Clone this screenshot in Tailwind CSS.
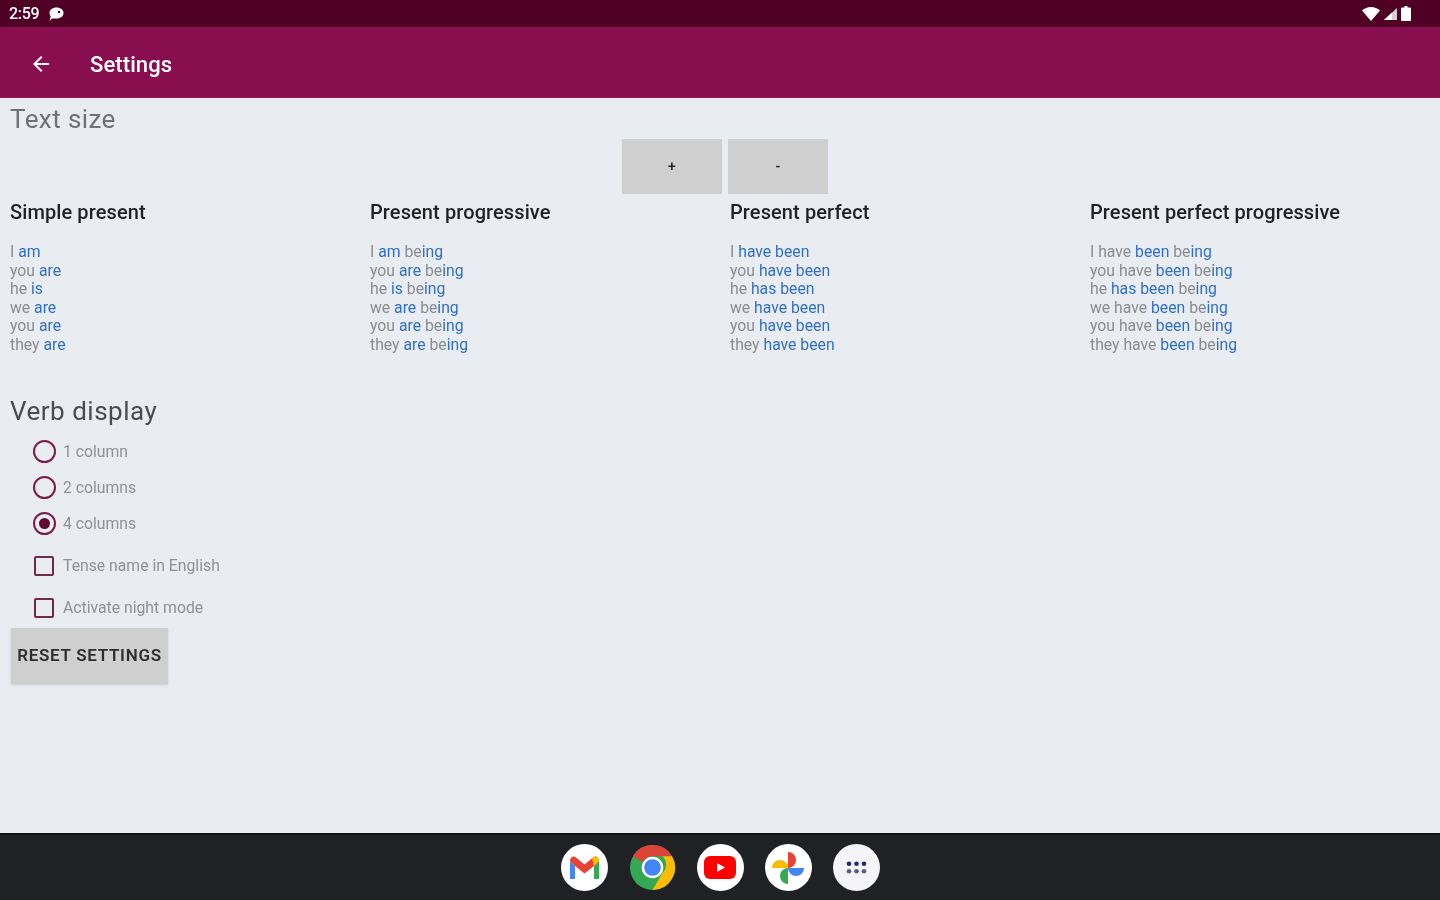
<!doctype html>
<html><head><meta charset="utf-8"><script src="https://cdn.jsdelivr.net/npm/@tailwindcss/browser@4"></script></head>
<body class="m-0">
<div class="w-[1440px] h-[900px] flex flex-col overflow-hidden bg-[#e9edf1] font-['Roboto',sans-serif] blur-[0.7px]">
  <div class="h-[27px] bg-[#4f0024] flex items-center justify-between pl-[9px] pr-[29px] text-white">
    <div class="flex items-center gap-[9px]">
      <span class="text-[16px] font-medium tracking-[-0.3px]">2:59</span>
      <svg width="17" height="16" viewBox="0 0 17 16"><path d="M8.500 1.500c4 0 7 2.300 7 5.500s-3 5.500-7 5.500H4l-2.500 2.500 1.200-4.500C1.900 9.500 1.500 8.300 1.500 7c0-3.200 3-5.500 7-5.500z" fill="#fff"/><circle cx="11" cy="6" r="1.300" fill="#4f0024"/></svg>
    </div>
    <div class="flex items-center gap-[3px]">
      <svg width="18" height="14" viewBox="0 0 18 14"><path d="M0 3.500C2.500 1.200 5.500 0 9 0s6.500 1.200 9 3.500L9 14z" fill="#fff"/></svg>
      <svg width="14" height="14" viewBox="0 0 14 14"><path d="M14 1v12H1z" fill="#d9ccd3"/><path d="M9 5.500V13H1z" fill="#fff"/></svg>
      <svg width="10" height="15" viewBox="0 0 10 15" class="ml-[1px]"><path d="M3.500 0h3v1.500H9a1 1 0 0 1 1 1V14a1 1 0 0 1-1 1H1a1 1 0 0 1-1-1V2.500a1 1 0 0 1 1-1h2.500z" fill="#fff"/></svg>
    </div>
  </div>
  <div class="h-[71px] bg-[#880e4f] flex items-center pl-[29px] pt-[4px] text-white border-b border-[#9c1a55]">
    <svg width="24" height="24" viewBox="0 0 24 24" class="shrink-0"><path d="M20 11H7.830l5.590-5.590L12 4l-8 8 8 8 1.410-1.410L7.830 13H20z" fill="#fff"/></svg>
    <span class="ml-[37px] mt-[2px] text-[22px] font-medium leading-none tracking-[0.1px]">Settings</span>
  </div>
  <main class="flex-1 relative">
    <div class="pl-[10px] pt-[5px] text-[26px] leading-[32px] text-[#6f7275] tracking-[0.4px]">Text size</div>
    <div class="flex justify-center gap-[6px] mt-[4px] ml-[10px]">
      <div class="w-[100px] h-[55px] bg-[#cfcfcf] flex items-center justify-center text-[14px] font-medium text-[#222]">+</div>
      <div class="w-[100px] h-[55px] bg-[#cfcfcf] flex items-center justify-center text-[14px] font-medium text-[#222]">-</div>
    </div>
    <div class="grid grid-cols-4 mt-[4px]">
      <div class="pl-[10px]">
        <h2 class="text-[20px] leading-[28px] font-medium text-[#1f2123] tracking-[0.1px]">Simple present</h2>
        <div class="mt-[17px] text-[15.750px] leading-[18.600px] text-[#8a8d90]">
          <p>I <b class="font-normal text-[#2f6fc4]">am</b></p><p>you <b class="font-normal text-[#2f6fc4]">are</b></p><p>he <b class="font-normal text-[#2f6fc4]">is</b></p><p>we <b class="font-normal text-[#2f6fc4]">are</b></p><p>you <b class="font-normal text-[#2f6fc4]">are</b></p><p>they <b class="font-normal text-[#2f6fc4]">are</b></p>
        </div>
      </div>
      <div class="pl-[10px]">
        <h2 class="text-[20px] leading-[28px] font-medium text-[#1f2123] tracking-[0.1px]">Present progressive</h2>
        <div class="mt-[17px] text-[15.750px] leading-[18.600px] text-[#8a8d90]">
          <p>I <b class="font-normal text-[#2f6fc4]">am</b> be<b class="font-normal text-[#2f6fc4]">ing</b></p><p>you <b class="font-normal text-[#2f6fc4]">are</b> be<b class="font-normal text-[#2f6fc4]">ing</b></p><p>he <b class="font-normal text-[#2f6fc4]">is</b> be<b class="font-normal text-[#2f6fc4]">ing</b></p><p>we <b class="font-normal text-[#2f6fc4]">are</b> be<b class="font-normal text-[#2f6fc4]">ing</b></p><p>you <b class="font-normal text-[#2f6fc4]">are</b> be<b class="font-normal text-[#2f6fc4]">ing</b></p><p>they <b class="font-normal text-[#2f6fc4]">are</b> be<b class="font-normal text-[#2f6fc4]">ing</b></p>
        </div>
      </div>
      <div class="pl-[10px]">
        <h2 class="text-[20px] leading-[28px] font-medium text-[#1f2123] tracking-[0.1px]">Present perfect</h2>
        <div class="mt-[17px] text-[15.750px] leading-[18.600px] text-[#8a8d90]">
          <p>I <b class="font-normal text-[#2f6fc4]">have been</b></p><p>you <b class="font-normal text-[#2f6fc4]">have been</b></p><p>he <b class="font-normal text-[#2f6fc4]">has been</b></p><p>we <b class="font-normal text-[#2f6fc4]">have been</b></p><p>you <b class="font-normal text-[#2f6fc4]">have been</b></p><p>they <b class="font-normal text-[#2f6fc4]">have been</b></p>
        </div>
      </div>
      <div class="pl-[10px]">
        <h2 class="text-[20px] leading-[28px] font-medium text-[#1f2123] tracking-[0.1px]">Present perfect progressive</h2>
        <div class="mt-[17px] text-[15.750px] leading-[18.600px] text-[#8a8d90]">
          <p>I have <b class="font-normal text-[#2f6fc4]">been</b> be<b class="font-normal text-[#2f6fc4]">ing</b></p><p>you have <b class="font-normal text-[#2f6fc4]">been</b> be<b class="font-normal text-[#2f6fc4]">ing</b></p><p>he <b class="font-normal text-[#2f6fc4]">has been</b> be<b class="font-normal text-[#2f6fc4]">ing</b></p><p>we have <b class="font-normal text-[#2f6fc4]">been</b> be<b class="font-normal text-[#2f6fc4]">ing</b></p><p>you have <b class="font-normal text-[#2f6fc4]">been</b> be<b class="font-normal text-[#2f6fc4]">ing</b></p><p>they have <b class="font-normal text-[#2f6fc4]">been</b> be<b class="font-normal text-[#2f6fc4]">ing</b></p>
        </div>
      </div>
    </div>
    <div class="pl-[10px] mt-[40px] text-[26px] leading-[32px] text-[#4a4d50] tracking-[0.5px]">Verb display</div>
    <div class="pl-[33px] mt-[7px] flex flex-col text-[15.750px] text-[#8f9295]">
      <label class="h-[36px] flex items-center gap-[7px]"><span class="w-[23px] h-[23px] rounded-full border-2 border-[#7a1c4a]"></span>1 column</label>
      <label class="h-[36px] flex items-center gap-[7px]"><span class="w-[23px] h-[23px] rounded-full border-2 border-[#7a1c4a]"></span>2 columns</label>
      <label class="h-[36px] flex items-center gap-[7px]"><span class="w-[23px] h-[23px] rounded-full border-2 border-[#7a1c4a] flex items-center justify-center"><span class="w-[11px] h-[11px] rounded-full bg-[#5e0a35]"></span></span>4 columns</label>
      <label class="h-[42px] mt-[3px] flex items-center gap-[9px]"><span class="w-[20px] h-[20px] ml-[1px] border-2 border-[#6e2a4c] rounded-[2px]"></span>Tense name in English</label>
      <label class="h-[42px] flex items-center gap-[9px]"><span class="w-[20px] h-[20px] ml-[1px] border-2 border-[#6e2a4c] rounded-[2px]"></span>Activate night mode</label>
    </div>
    <div class="-mt-[1px] ml-[11px] w-[157px] h-[56px] bg-[#cfcfcf] flex items-center justify-center text-[17px] font-semibold text-[#2e2e2e] tracking-[0.7px] shadow-sm">RESET SETTINGS</div>
  </main>
  <div class="h-[67px] bg-[#202124] border-t-2 border-[#111] flex items-center justify-center gap-[21px]">
    <div class="w-[47px] h-[47px] rounded-full bg-white flex items-center justify-center">
      <svg width="33" height="26" viewBox="0 0 33 26"><path d="M2 24V6l14.500 11L31 6v18h-7V11l-7.500 6L9 11v13z" fill="#fff"/><path d="M2 24h5V11L2 6z" fill="#4285f4"/><path d="M26 24h5V6l-5 5z" fill="#34a853"/><path d="M2 6c0-4 3.500-5.500 6-3.500l8.500 7 8.500-7c2.500-2 6-.5 6 3.500l-5 5-9.500 7.500L7 11z" fill="#ea4335"/><path d="M26 11l5-5c0-4-3.500-5.500-6-3.500l-1 .8z" fill="#fbbc04"/></svg>
    </div>
    <div class="w-[47px] h-[47px] rounded-full flex items-center justify-center">
      <svg width="47" height="47" viewBox="0 0 48 48"><circle cx="24" cy="24" r="23" fill="#34a853"/><path d="M24 1a23 23 0 0 1 20 11.500H24a11.500 11.500 0 0 0-10 5.800L4 12.500A23 23 0 0 1 24 1z" fill="#db4437"/><path d="M44 12.500A23 23 0 0 1 24 47l10-17.200a11.500 11.500 0 0 0 0-17.300z" fill="#fbbc04"/><circle cx="24" cy="24" r="11" fill="#fff"/><circle cx="24" cy="24" r="8.500" fill="#4285f4"/></svg>
    </div>
    <div class="w-[47px] h-[47px] rounded-full bg-white flex items-center justify-center">
      <svg width="32" height="23" viewBox="0 0 32 23"><rect width="32" height="23" rx="6" fill="#f00"/><path d="M13 7l8 4.500-8 4.500z" fill="#fff"/></svg>
    </div>
    <div class="w-[47px] h-[47px] rounded-full bg-white flex items-center justify-center">
      <svg width="34" height="34" viewBox="0 0 36 36"><path d="M18 18H1a8.500 8.500 0 0 1 17 0z" fill="#fbbc04"/><path d="M18 18V1a8.500 8.500 0 0 1 0 17z" fill="#ea4335"/><path d="M18 18h17a8.500 8.500 0 0 1-17 0z" fill="#4285f4"/><path d="M18 18v17a8.500 8.500 0 0 1 0-17z" fill="#34a853"/></svg>
    </div>
    <div class="w-[47px] h-[47px] rounded-full bg-[#f5f5f8] flex items-center justify-center">
      <svg width="23" height="15" viewBox="0 0 24 16"><circle cx="4" cy="4" r="2.500" fill="#26267a"/><circle cx="12" cy="4" r="2.500" fill="#26267a"/><circle cx="20" cy="4" r="2.500" fill="#26267a"/><circle cx="4" cy="12" r="2.500" fill="#5a5f7a"/><circle cx="12" cy="12" r="2.500" fill="#5a5f7a"/><circle cx="20" cy="12" r="2.500" fill="#5a5f7a"/></svg>
    </div>
  </div>
</div>
</body></html>
